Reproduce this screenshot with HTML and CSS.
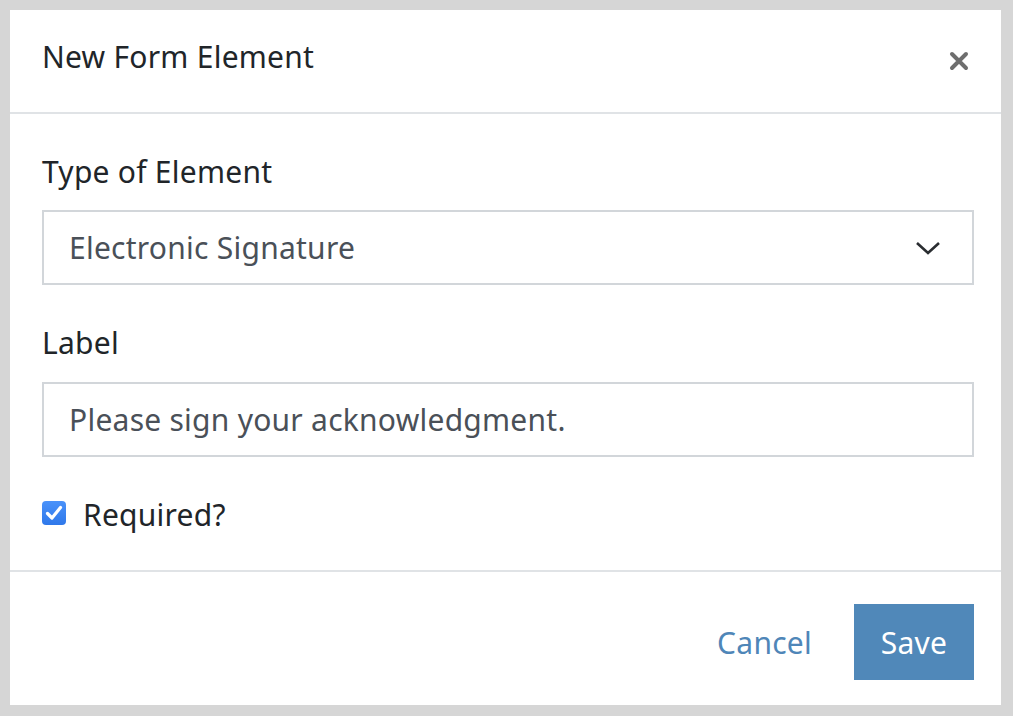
FILE: index.html
```html
<!DOCTYPE html>
<html lang="en">
<head>
<meta charset="utf-8">
<title>New Form Element</title>
<link rel="stylesheet" href="styles.css">
</head>
<body>
<div class="modal">
  <div class="modal-header">
    <h1 class="modal-title">New Form Element</h1>
    <button class="close" aria-label="Close">
      <svg width="20" height="20" viewBox="0 0 20 20"><path d="M3 3 L17 17 M17 3 L3 17" stroke="#6e6e6e" stroke-width="4" stroke-linecap="round"/></svg>
    </button>
  </div>
  <div class="modal-body">
    <div class="field-label">Type of Element</div>
    <div class="box select">
      <span>Electronic Signature</span>
      <svg class="chev" width="26" height="16" viewBox="0 0 26 16"><path d="M2 3 L13 13 L24 3" fill="none" stroke="#2a2d31" stroke-width="2.6"/></svg>
    </div>
    <div class="field-label second">Label</div>
    <div class="box input"><span>Please sign your acknowledgment.</span></div>
    <div class="check-row">
      <span class="checkbox">
        <svg width="24" height="24" viewBox="0 0 24 24"><path d="M5.5 12.5 L10 17 L18.5 6.5" fill="none" stroke="#fff" stroke-width="3.2" stroke-linecap="round" stroke-linejoin="round"/></svg>
      </span>
      <span class="check-label">Required?</span>
    </div>
  </div>
  <div class="modal-footer">
    <button class="btn-link">Cancel</button>
    <button class="btn-primary">Save</button>
  </div>
</div>
</body>
</html>
```

FILE: styles.css
```css
html, body {
  margin: 0;
  padding: 0;
}
body {
  background: #d6d6d6;
  width: 1013px;
  height: 716px;
  padding: 10px 12px 11px 10px;
  box-sizing: border-box;
  font-family: "Noto Sans", "Open Sans", sans-serif;
  letter-spacing: 0.25px;
}
.modal {
  background: #fff;
  width: 991px;
  height: 695px;
  display: flex;
  flex-direction: column;
}
.modal-header {
  height: 102px;
  border-bottom: 2px solid #e0e3e6;
  display: flex;
  align-items: center;
  justify-content: space-between;
  padding: 0 32px 0 32px;
  box-sizing: content-box;
}
.modal-title {
  margin: 0;
  font-size: 30px;
  font-weight: 400;
  color: #212529;
  line-height: 42px;
  position: relative;
  top: -4px;
}
.close {
  background: none;
  border: none;
  padding: 0;
  width: 20px;
  height: 20px;
  display: flex;
}
.modal-body {
  padding: 37px 27px 35px 32px;
  display: flex;
  flex-direction: column;
}
.field-label {
  font-size: 30px;
  line-height: 42px;
  color: #212529;
  margin-bottom: 17px;
}
.field-label.second {
  margin-top: 37px;
  margin-bottom: 18px;
}
.box {
  height: 75px;
  box-sizing: border-box;
  border: 2px solid #d2d6da;
  display: flex;
  align-items: center;
  padding: 0 31px 0 25px;
  font-size: 30px;
  color: #4a5058;
}
.select {
  justify-content: space-between;
}
.check-row {
  margin-top: 36px;
  display: flex;
  align-items: center;
  height: 42px;
}
.checkbox {
  width: 24px;
  height: 24px;
  border-radius: 4px;
  background: linear-gradient(#4a92fa, #2f78ea);
  display: flex;
  align-items: center;
  justify-content: center;
  margin-right: 17px;
  position: relative;
  top: -1px;
}
.check-label {
  font-size: 30px;
  color: #212529;
  line-height: 42px;
  position: relative;
  top: 1px;
}
.modal-footer {
  border-top: 2px solid #e0e3e6;
  flex: 1;
  display: flex;
  justify-content: flex-end;
  align-items: flex-start;
  padding: 32px 27px 0 0;
}
.btn-link, .btn-primary {
  font-family: inherit;
  font-size: 30px;
  letter-spacing: 0.25px;
  border: none;
  height: 76px;
  padding: 0;
}
.btn-link {
  background: none;
  color: #4f86b8;
  margin-right: 42px;
}
.btn-primary {
  background: #5088b9;
  color: #fff;
  width: 120px;
}
```
